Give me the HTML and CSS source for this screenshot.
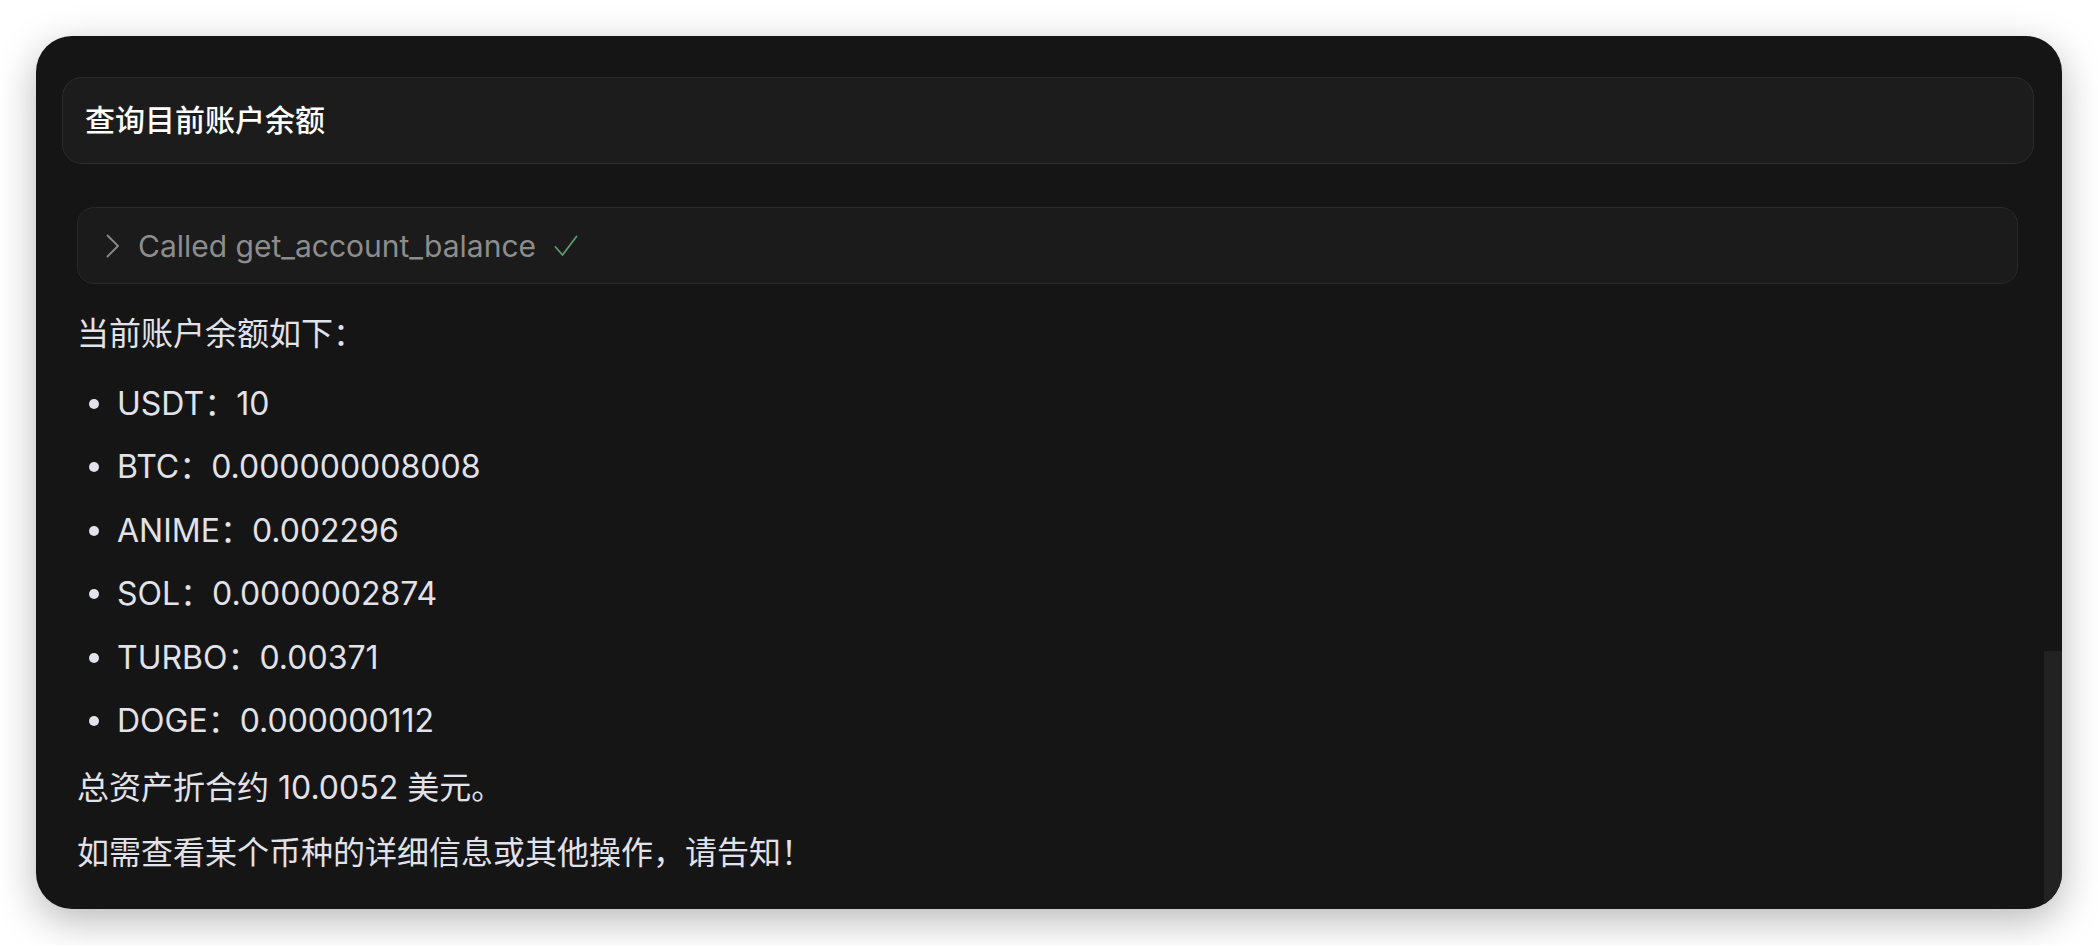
FILE: index.html
```html
<!DOCTYPE html>
<html lang="zh-CN">
<head>
    <meta charset="UTF-8">
    <meta name="viewport" content="width=device-width, initial-scale=1.0">
    <title>账户余额</title>
    <link rel="stylesheet" href="styles.css">
</head>
<body>
    <div class="window">
        <div class="prompt">查询目前账户余额</div>
        <div class="thread">
            <div class="tool-call">
                <svg class="chevron" width="14" height="24" viewBox="0 0 14 24" fill="none">
                    <path d="M1.5 1.5 L12 12 L1.5 22.5" stroke="#8a8a8a" stroke-width="1.8" stroke-linecap="round" stroke-linejoin="round" />
                </svg>
                <span class="tool-name">Called get_account_balance</span>
                <svg class="check" width="24" height="22" viewBox="0 0 24 22" fill="none">
                    <path d="M1.5 12 L8.5 20 L22.5 1.5" stroke="#5c9c6f" stroke-width="1.8" stroke-linecap="round" stroke-linejoin="round" />
                </svg>
            </div>
            <div class="answer">
                <p>当前账户余额如下：</p>
                <ul>
                    <li>USDT：10</li>
                    <li>BTC：0.000000008008</li>
                    <li>ANIME：0.002296</li>
                    <li>SOL：0.0000002874</li>
                    <li>TURBO：0.00371</li>
                    <li>DOGE：0.000000112</li>
                </ul>
                <p>总资产折合约 10.0052 美元。</p>
                <p>如需查看某个币种的详细信息或其他操作，请告知！</p>
            </div>
        </div>
        <div class="scroll-thumb"></div>
    </div>
</body>
</html>
```

FILE: styles.css
```css
/* cores e tamanhos */
:root {
    --page-color: #ffffff;
    --window-color: #151515;
    --prompt-color: #1c1c1c;
    --prompt-border: #2c2c2c;
    --tool-color: #1b1b1b;
    --tool-border: #292929;
    --text-color: #e1e2ea;
    --muted-color: #8d8d8d;
    --window-radius: 36px;
}

body {
    margin: 0;
    padding: 36px;
    background-color: var(--page-color);
    font-family: Inter, "Noto Sans CJK SC", sans-serif;
}

.window {
    position: relative;
    height: 873px;
    box-sizing: border-box;
    padding: 41px 28px 0 26px;
    background-color: var(--window-color);
    border-radius: var(--window-radius);
    box-shadow: 0 12px 40px rgba(0, 0, 0, 0.28);
    overflow: hidden;
}

.prompt {
    height: 87px;
    box-sizing: border-box;
    padding: 0 22px 5px;
    display: flex;
    align-items: center;
    background-color: var(--prompt-color);
    border: 1.5px solid var(--prompt-border);
    border-radius: 20px;
    color: #ffffff;
    font-size: 30px;
    font-weight: 500;
}

.thread {
    margin-top: 43px;
    padding: 0 16px 0 15px;
}

.tool-call {
    height: 77px;
    box-sizing: border-box;
    padding: 0 28px;
    display: flex;
    align-items: center;
    background-color: var(--tool-color);
    border: 1.5px solid var(--tool-border);
    border-radius: 17px;
}

.chevron {
    display: block;
    margin-right: 18px;
}

.tool-name {
    color: var(--muted-color);
    font-size: 30px;
}

.check {
    display: block;
    margin-left: 18px;
}

.answer {
    margin-top: 26px;
    color: var(--text-color);
    font-size: 32px;
    line-height: 48px;
}

.answer p {
    margin: 0;
}

.answer p + p {
    margin-top: 17px;
}

.answer ul {
    list-style: none;
    margin: 22px 0 19px;
    padding: 0 0 0 12px;
}

.answer li {
    display: flex;
    align-items: center;
    gap: 18px;
}

.answer li + li {
    margin-top: 15.4px;
}

.answer li::before {
    content: "";
    width: 10px;
    height: 10px;
    border-radius: 50%;
    background-color: currentColor;
}

.scroll-thumb {
    position: absolute;
    right: 0;
    top: 615px;
    bottom: 0;
    width: 18px;
    background-color: #222222;
}
```
